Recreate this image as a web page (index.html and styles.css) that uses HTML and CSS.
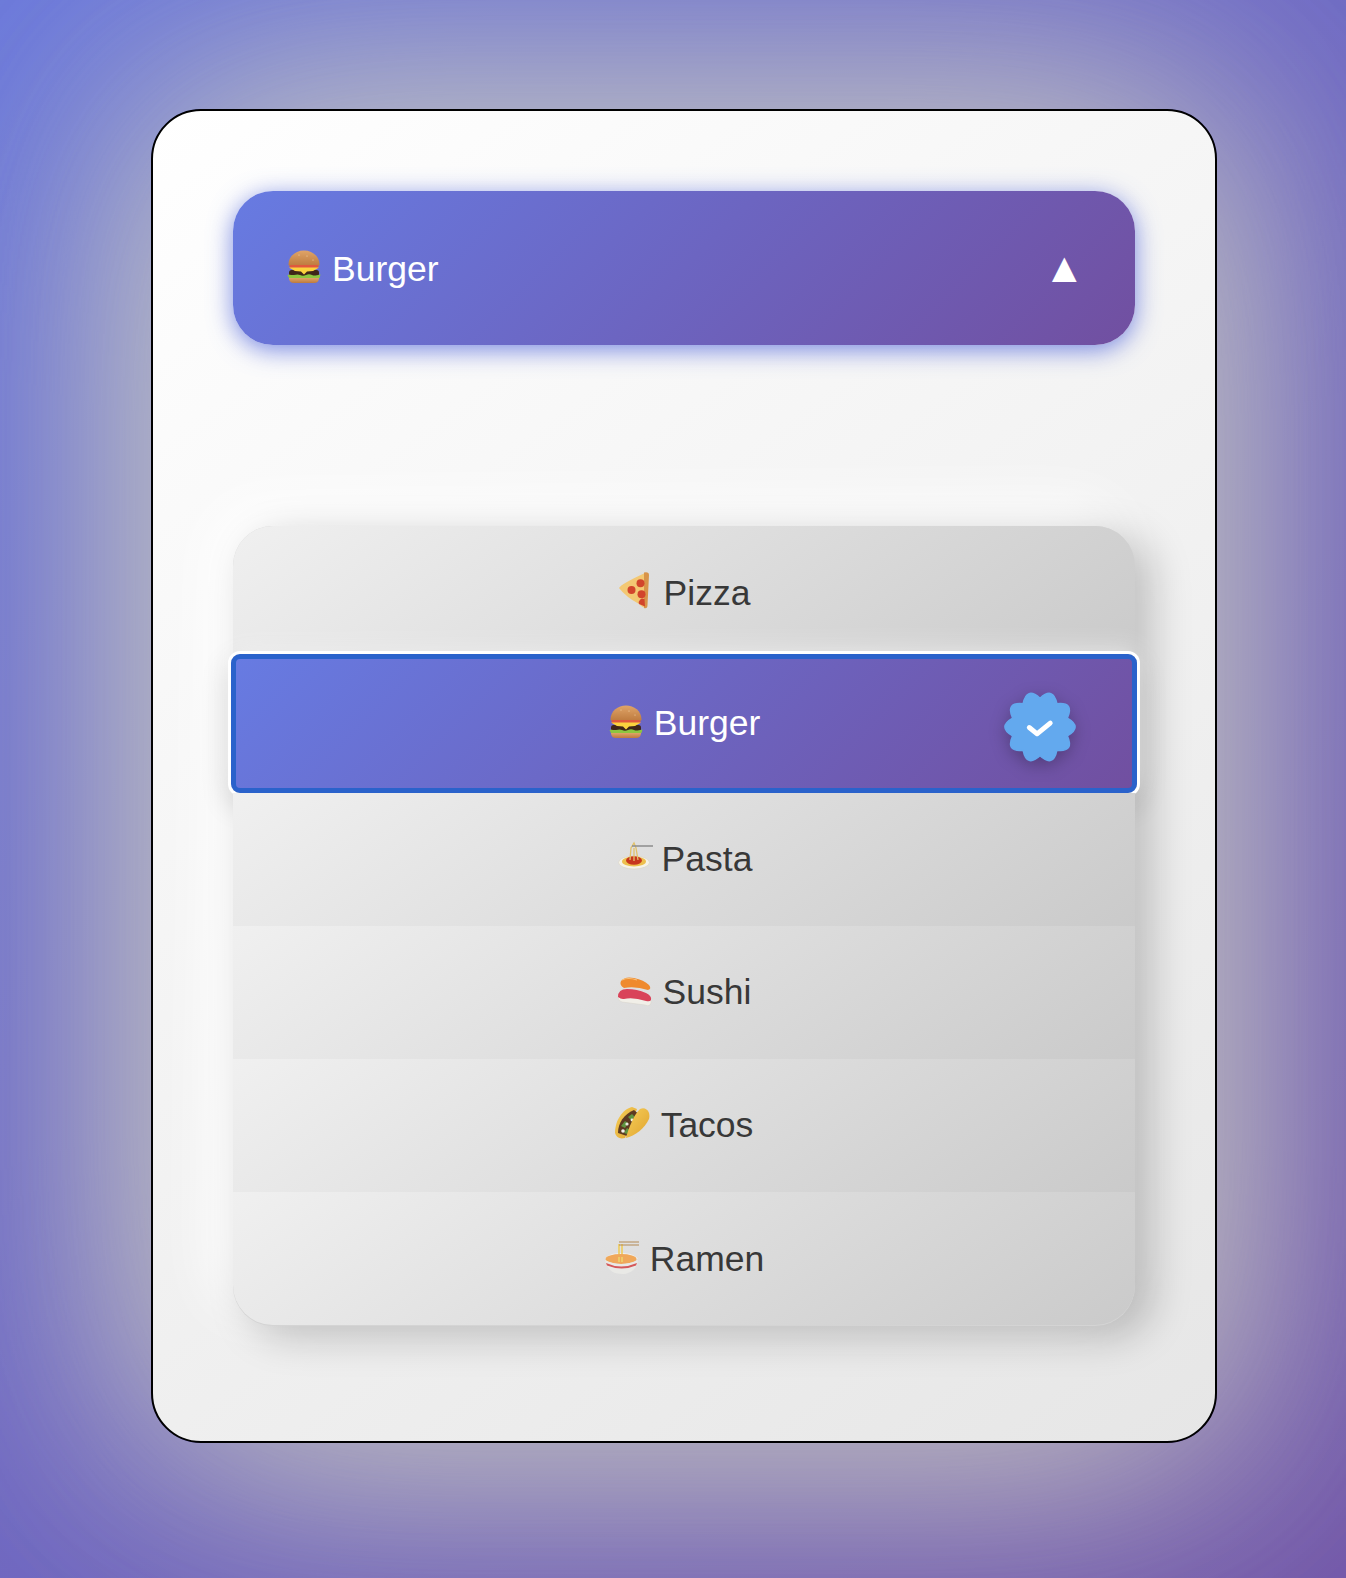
FILE: index.html
```html
<!DOCTYPE html>
<html lang="en">
<head>
  <meta charset="UTF-8" />
  <title>Food picker</title>
  <link rel="stylesheet" href="styles.css">
</head>
<body>

  <svg class="sprites" width="0" height="0" aria-hidden="true">
    <defs>
      <linearGradient id="bun" x1="0" y1="0" x2="0" y2="1">
        <stop offset="0" stop-color="#e0a468"/>
        <stop offset="1" stop-color="#bd7a3e"/>
      </linearGradient>
      <linearGradient id="shell" x1="0" y1="0" x2="1" y2="1">
        <stop offset="0" stop-color="#f6cf5a"/>
        <stop offset="1" stop-color="#e0a32e"/>
      </linearGradient>

      <symbol id="burger" viewBox="0 0 36 36">
        <path d="M2.500 15.500C2.500 7 10 1.500 18 1.500S33.500 7 33.500 15.500q0 1.500-2 1.500h-27q-2 0-2-1.500z" fill="url(#bun)"/>
        <circle cx="13" cy="6" r=".6" fill="#f2d6a8"/>
        <circle cx="21" cy="7" r=".6" fill="#f2d6a8"/>
        <circle cx="27" cy="11" r=".6" fill="#f2d6a8"/>
        <rect x="3" y="21" width="30" height="6" rx="2.500" fill="#3f2619"/>
        <rect x="3.500" y="16" width="29" height="3.500" rx="1.700" fill="#e0583e"/>
        <path d="M3 18.500h30l-6 3.500-6 .5-3 3-3-3-6-.5z" fill="#fbd23e"/>
        <path d="M1.500 26c3-1 4 .5 6.500 0s4-1 6 0 4 1 6 0 4-1 6 0 4 .5 8.500-.5l-1 3.500H3z" fill="#8cc63f"/>
        <path d="M3 29h30q0 5-5 5H8q-5 0-5-5z" fill="url(#bun)"/>
      </symbol>

      <symbol id="pizza" viewBox="0 0 36 36">
        <path d="M1 14Q3 10 27-1l1 35q-3 0-7-4Q8 23 1 14z" fill="#f3c873"/>
        <path d="M26-1.500q5-1 5 2.500l-1.500 30q0 4-3.500 3z" fill="#d8944a"/>
        <circle cx="22.500" cy="9.300" r="4" fill="#d2452c"/>
        <circle cx="13.500" cy="16" r="4" fill="#d2452c"/>
        <circle cx="23.500" cy="20.300" r="4" fill="#d2452c"/>
        <path d="M21 30a4 4 0 0 1 5.500-5l.5 7.500z" fill="#d2452c"/>
      </symbol>

      <symbol id="pasta" viewBox="0 0 36 36">
        <ellipse cx="18" cy="22.500" rx="15.500" ry="6.500" fill="#f6f3e8" stroke="#d8d4c4" stroke-width=".6"/>
        <ellipse cx="18" cy="21.500" rx="12" ry="5" fill="#edc04e"/>
        <ellipse cx="18" cy="20.500" rx="8" ry="4.200" fill="#c7361e"/>
        <path d="M14 20 15 8l3-5 2 5 2 12M18 21V8" fill="none" stroke="#e2c26a" stroke-width="1.300"/>
        <path d="M16 6h21" stroke="#8c8c8c" stroke-width="1.500"/>
      </symbol>

      <symbol id="sushi" viewBox="0 0 36 36">
        <path d="M1 24q1-5 10-5l15 3q9 3 8 8-1 4-6 2L5 29q-4-1-4-5z" fill="#f1efe8" stroke="#d6d3ca" stroke-width=".5"/>
        <path d="M1 24q0-8 9-8 10 0 19 4 6 3 5 7-1 2-5 1-13-4-22-2-3 .5-6-2z" fill="#d9435a"/>
        <path d="M4 8q4-5 13-3 10 2 15 7 3 4-1 5-13-4-24-2-5-3-3-7z" fill="#ef8a2e"/>
        <path d="M5 7q6-3 15 0" stroke="#f8c27a" stroke-width="1.200" fill="none"/>
      </symbol>

      <symbol id="taco" viewBox="0 0 36 36">
        <path d="M0 27C0 14 8 3 17 1l5 2-12 29Q2 34 0 27z" fill="url(#shell)"/>
        <path d="M3 27C3 17 9 8 19 4l7 6-14 20z" fill="#5d3a22"/>
        <path d="M6 20l4-5 3 2-3 5zM13 11l4-3 3 3-4 3zM9 27l3-5 3 2-3 4z" fill="#5f9440"/>
        <circle cx="8" cy="25" r="1.800" fill="#f2f2ea"/>
        <circle cx="12" cy="18" r="1.600" fill="#e8e8de"/>
        <circle cx="17" cy="14" r="1.400" fill="#f2f2ea"/>
        <path d="M10.700 32C14 22 18 10 25 3c6-3 11 3 9 10-4 9-14 17-23.300 19z" fill="url(#shell)"/>
      </symbol>

      <symbol id="ramen" viewBox="0 0 36 36">
        <path d="M1 19c3-4 8-6 16-6s14 2 17 6z" fill="#f0f0ee"/>
        <path d="M15 4v16M18 4v16" stroke="#eecf6a" stroke-width="1.800"/>
        <path d="M15 2h20M15 5h20" stroke="#b38a55" stroke-width="1.200"/>
        <ellipse cx="17" cy="19" rx="15.500" ry="5" fill="#f0a85a"/>
        <path d="M15 17v5M18 17v5" stroke="#eecf6a" stroke-width="1.800"/>
        <path d="M1 20q16 8 33 0-1 10-10 13-3 2-13 0Q3 30 1 20z" fill="#e9e9e6"/>
        <path d="M2 23q15 7 31 0l-1 2.500q-14 6-29 0z" fill="#d5585a"/>
      </symbol>
    </defs>
  </svg>

  <div class="card">
    <button class="trigger">
      <span class="label">
        <svg class="emoji"><use href="#burger"/></svg> Burger
      </span>
      <span class="arrow">▲</span>
    </button>

    <ul class="menu">
      <li class="item">
        <svg class="emoji"><use href="#pizza"/></svg> Pizza
      </li>
      <li class="item selected">
        <svg class="emoji"><use href="#burger"/></svg> Burger
        <svg class="badge" viewBox="-40 -40 80 80">
          <path d="M28.060-9.120Q44 0 28.060 9.120 35.600 25.860 17.340 23.870 13.600 41.850 0 29.500-13.600 41.850-17.340 23.870-35.600 25.860-28.060 9.120-44 0-28.060-9.120-35.600-25.860-17.340-23.870-13.600-41.850 0-29.500 13.600-41.850 17.340-23.870 35.600-25.860 28.060-9.120z" fill="#63a9ee" stroke="#63a9ee" stroke-width="1.500" stroke-linejoin="round"/>
          <path d="M-11 .5-3 7 10.500-4" fill="none" stroke="#fff" stroke-width="5" stroke-linecap="round" stroke-linejoin="round"/>
        </svg>
      </li>
      <li class="item after">
        <svg class="emoji"><use href="#pasta"/></svg> Pasta
      </li>
      <li class="item after">
        <svg class="emoji"><use href="#sushi"/></svg> Sushi
      </li>
      <li class="item after">
        <svg class="emoji"><use href="#taco"/></svg> Tacos
      </li>
      <li class="item after">
        <svg class="emoji"><use href="#ramen"/></svg> Ramen
      </li>
    </ul>
  </div>

</body>
</html>
```

FILE: styles.css
```css
* {
  box-sizing: border-box;
}

html, body {
  height: 100%;
}

body {
  margin: 0;
  padding: 109px 0 0 151px;
  overflow: hidden;
  font-family: "Liberation Sans", Arial, sans-serif;
  background: linear-gradient(135deg, #6a78dc 0%, #7257aa 100%);
}

.sprites {
  position: absolute;
}

symbol {
  overflow: visible;
}

.card {
  width: 1066px;
  height: 1334px;
  padding: 80px;
  border: 2px solid #000;
  border-radius: 50px;
  background: linear-gradient(145deg, #ffffff, #e6e6e6);
  box-shadow: 12px 12px 300px rgba(200, 200, 190, 0.8), -12px -12px 300px rgba(205, 205, 195, 0.8);
}

.trigger {
  display: flex;
  align-items: center;
  justify-content: space-between;
  width: 902px;
  height: 154px;
  padding: 0 50px 0 53px;
  border: 0;
  border-radius: 40px;
  font: inherit;
  font-size: 35.500px;
  color: #fff;
  background: linear-gradient(135deg, #677be2, #714fa0);
  box-shadow: 0 5px 25px rgba(90, 110, 220, 0.8);
}

.label {
  display: flex;
  align-items: center;
  gap: 10px;
  padding-top: 3px;
}

.emoji {
  width: 36px;
  height: 36px;
  margin-top: -3px;
  overflow: visible;
}

.label .emoji {
  margin-top: -6px;
}

.arrow {
  font-size: 42px;
}

.menu {
  display: flex;
  flex-direction: column;
  width: 902px;
  height: 800px;
  margin: 181px 0 0;
  padding: 0;
  list-style: none;
  border-radius: 40px;
  background: #d4d4d4;
  box-shadow: 16px 10px 40px rgba(0, 0, 0, 0.22), -20px -20px 60px #ffffff;
}

.item {
  display: flex;
  align-items: center;
  justify-content: center;
  gap: 10px;
  height: 133.200px;
  padding-top: 1px;
  font-size: 35.500px;
  color: #383838;
  background: linear-gradient(145deg, #f0f0f0, #cacaca);
}

.item:first-child {
  height: 133px;
  border-radius: 40px 40px 0 0;
}

.item:last-child {
  border-radius: 0 0 40px 40px;
}

.item.after {
  position: relative;
  z-index: 2;
}

.item.selected {
  position: relative;
  z-index: 1;
  height: 139px;
  margin: -5.500px -2px 0 -2px;
  padding-top: 0;
  border: 5px solid #2a62cb;
  border-radius: 9px;
  color: #fff;
  background: linear-gradient(135deg, #677be2, #714fa0);
  box-shadow: 0 0 0 3px #fff, 0 -4px 24px rgba(255, 255, 255, 0.7), 0 10px 30px rgba(0, 0, 0, 0.2);
}

.badge {
  position: absolute;
  top: 29px;
  right: 53px;
  width: 78px;
  height: 78px;
  filter: drop-shadow(0 5px 8px rgba(0, 0, 0, 0.25));
}
```
